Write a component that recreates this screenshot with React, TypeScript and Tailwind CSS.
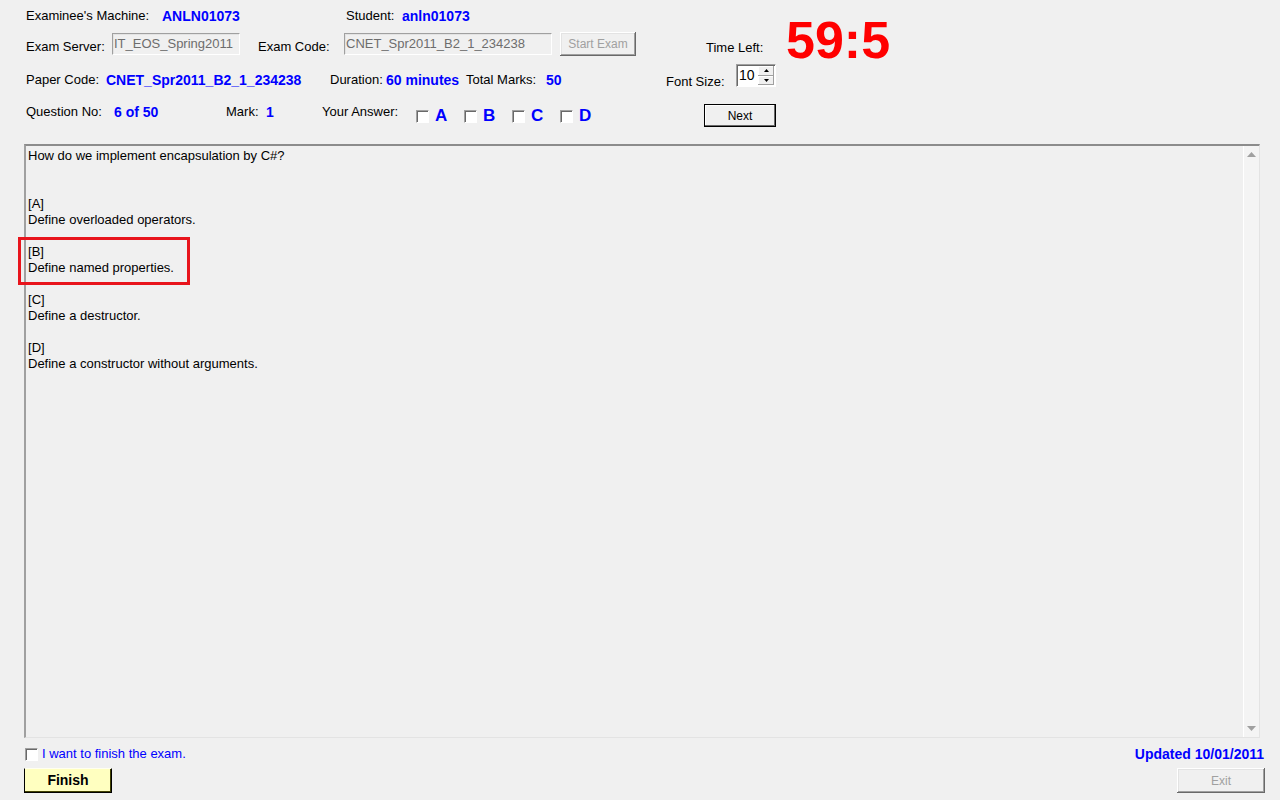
import React from 'react';

const btn3d = 'shadow-[inset_-1px_-1px_0_#696969,inset_1px_1px_0_#ffffff,inset_-2px_-2px_0_#a0a0a0,inset_2px_2px_0_#e3e3e3]';
const sunken = 'border-t border-l border-t-[#a0a0a0] border-l-[#a0a0a0] border-b border-r border-b-white border-r-white';

const CheckBox: React.FC<{ className?: string }> = ({ className = '' }) => (
  <span className={`inline-block w-[13px] h-[13px] shrink-0 bg-white ${sunken} shadow-[inset_1px_1px_0_#696969] ${className}`}></span>
);

const Answer: React.FC<{ letter: string }> = ({ letter }) => (
  <div className="flex w-[48px] shrink-0 items-start">
    <CheckBox className="mt-[16px]" />
    <span className="ml-[6px] mt-[13px] text-[17px] leading-[18px] font-bold text-[#0000ff]">{letter}</span>
  </div>
);

const options = [
  { key: 'A', text: 'Define overloaded operators.' },
  { key: 'B', text: 'Define named properties.' },
  { key: 'C', text: 'Define a destructor.' },
  { key: 'D', text: 'Define a constructor without arguments.' },
];

const App: React.FC = () => {
  return (
    <div
      className="w-[1280px] h-[800px] bg-[#f0f0f0] text-black text-[13px] overflow-hidden flex flex-col"
      style={{ fontFamily: '"Liberation Sans", Arial, sans-serif' }}
    >
      {/* Header rows 1-2 with timer */}
      <div className="flex h-[62px] shrink-0 pl-[26px] whitespace-nowrap">
        <div className="flex flex-col">
          <div className="flex h-[32px] items-center">
            <span className="w-[136px] shrink-0">Examinee's Machine:</span>
            <span className="w-[184px] shrink-0 font-bold text-[14px] text-[#0000ff]">ANLN01073</span>
            <span className="w-[56px] shrink-0">Student:</span>
            <span className="font-bold text-[14px] text-[#0000ff]">anln01073</span>
          </div>
          <div className="flex h-[24px] items-start">
            <span className="w-[86px] shrink-0 mt-[7px] leading-[16px]">Exam Server:</span>
            <div className={`w-[128px] h-[22px] mt-[1px] shrink-0 px-[1px] leading-[19px] text-[#6d6d6d] bg-[#f0f0f0] ${sunken} shadow-[inset_1px_1px_0_#e3e3e3]`}>IT_EOS_Spring2011</div>
            <span className="w-[86px] shrink-0 ml-[18px] mt-[7px] leading-[16px]">Exam Code:</span>
            <div className={`w-[208px] h-[22px] mt-[1px] shrink-0 px-[1px] leading-[19px] text-[#6d6d6d] bg-[#f0f0f0] ${sunken} shadow-[inset_1px_1px_0_#e3e3e3]`}>CNET_Spr2011_B2_1_234238</div>
            <button className={`ml-[8px] w-[76px] h-[24px] shrink-0 bg-[#f0f0f0] text-[12px] text-[#a0a0a0] ${btn3d}`}>Start Exam</button>
          </div>
        </div>
        <span className="ml-[70px] w-[80px] shrink-0 mt-[40px] leading-[16px] h-[16px]">Time Left:</span>
        <span className="mt-[14px] text-[52px] leading-none font-bold text-[#ff0000] h-[52px]">59:5</span>
      </div>

      {/* Row 3 */}
      <div className="flex h-[32px] shrink-0 pl-[26px] items-start whitespace-nowrap">
        <span className="w-[80px] shrink-0 mt-[10px] leading-[16px]">Paper Code:</span>
        <span className="w-[224px] shrink-0 mt-[10px] leading-[16px] font-bold text-[14px] text-[#0000ff]">CNET_Spr2011_B2_1_234238</span>
        <span className="w-[56px] shrink-0 mt-[10px] leading-[16px]">Duration:</span>
        <span className="w-[80px] shrink-0 mt-[10px] leading-[16px] font-bold text-[14px] text-[#0000ff]">60 minutes</span>
        <span className="w-[80px] shrink-0 mt-[10px] leading-[16px]">Total Marks:</span>
        <span className="w-[120px] shrink-0 mt-[10px] leading-[16px] font-bold text-[14px] text-[#0000ff]">50</span>
        <span className="w-[70px] shrink-0 mt-[12px] leading-[16px]">Font Size:</span>
        <div className={`mt-[2px] w-[40px] h-[23px] shrink-0 flex bg-white ${sunken} shadow-[inset_1px_1px_0_#696969]`}>
          <span className="flex-1 pl-[2px] pt-[1px] text-[14px] leading-[19px]">10</span>
          <div className="w-[16px] flex flex-col mt-[1px] mr-[1px] mb-[1px]">
            <div className="flex-1 flex items-center justify-center bg-[#f0f0f0] shadow-[inset_-1px_-1px_0_#a0a0a0,inset_1px_1px_0_#ffffff]">
              <svg width="5" height="3" viewBox="0 0 5 3"><path d="M2.5 0 L5 3 L0 3 Z" fill="#000" /></svg>
            </div>
            <div className="flex-1 flex items-center justify-center bg-[#f0f0f0] shadow-[inset_-1px_-1px_0_#a0a0a0,inset_1px_1px_0_#ffffff]">
              <svg width="5" height="3" viewBox="0 0 5 3"><path d="M0 0 L5 0 L2.5 3 Z" fill="#000" /></svg>
            </div>
          </div>
        </div>
      </div>

      {/* Row 4 */}
      <div className="flex h-[40px] shrink-0 pl-[26px] items-start whitespace-nowrap">
        <span className="w-[88px] shrink-0 mt-[10px] leading-[16px]">Question No:</span>
        <span className="w-[112px] shrink-0 mt-[10px] leading-[16px] font-bold text-[14px] text-[#0000ff]">6 of 50</span>
        <span className="w-[40px] shrink-0 mt-[10px] leading-[16px]">Mark:</span>
        <span className="w-[56px] shrink-0 mt-[10px] leading-[16px] font-bold text-[14px] text-[#0000ff]">1</span>
        <span className="w-[94px] shrink-0 mt-[10px] leading-[16px]">Your Answer:</span>
        {options.map(o => (
          <Answer key={o.key} letter={o.key} />
        ))}
        <button className="ml-[96px] mt-[10px] w-[72px] h-[23px] shrink-0 bg-[#f0f0f0] text-[12px] border border-black shadow-[inset_-1px_-1px_0_#696969,inset_1px_1px_0_#ffffff]">Next</button>
      </div>

      {/* Question area */}
      <div className="mt-[10px] ml-[24px] w-[1236px] h-[594px] shrink-0 flex border-t-2 border-l-2 border-t-[#8c8c8c] border-l-[#a0a0a0] border-b border-r border-b-[#e3e3e3] border-r-[#e3e3e3]">
        <div className="relative flex-1 pl-[2px] pt-[2px] leading-[16px]">
          <div>How do we implement encapsulation by C#?</div>
          <div className="h-[32px]"></div>
          {options.map(o => (
            <div key={o.key} className="mb-[16px]">
              <div>[{o.key}]</div>
              <div>{o.text}</div>
            </div>
          ))}
          <div className="absolute left-[-8px] top-[91px] w-[172px] h-[48px] border-[3px] border-[#e8141c]"></div>
        </div>
        <div className="w-[16px] shrink-0 bg-[#f4f4f4] border-l border-l-white flex flex-col justify-between items-center py-[6px]">
          <svg width="9" height="5" viewBox="0 0 9 5"><path d="M4.5 0 L9 5 L0 5 Z" fill="#a0a0a0" /></svg>
          <svg width="9" height="5" viewBox="0 0 9 5"><path d="M0 0 L9 0 L4.5 5 Z" fill="#a0a0a0" /></svg>
        </div>
      </div>

      {/* Bottom */}
      <div className="flex justify-between items-center mt-[8px] h-[16px] pl-[25px] pr-[16px] whitespace-nowrap">
        <div className="flex items-center">
          <CheckBox />
          <span className="ml-[4px] text-[#0000ff]">I want to finish the exam.</span>
        </div>
        <span className="font-bold text-[14px] text-[#0000ff]">Updated 10/01/2011</span>
      </div>
      <div className="flex justify-between mt-[6px] pl-[24px] pr-[15px]">
        <button className="w-[88px] h-[25px] bg-[#ffffc0] font-bold text-[14px] border border-t-[#fffff0] border-l-black border-b-black border-r-black shadow-[inset_-1px_-1px_0_#404000]">Finish</button>
        <button className={`w-[88px] h-[25px] bg-[#f0f0f0] text-[12px] text-[#a0a0a0] ${btn3d}`}>Exit</button>
      </div>
    </div>
  );
};

export default App;
